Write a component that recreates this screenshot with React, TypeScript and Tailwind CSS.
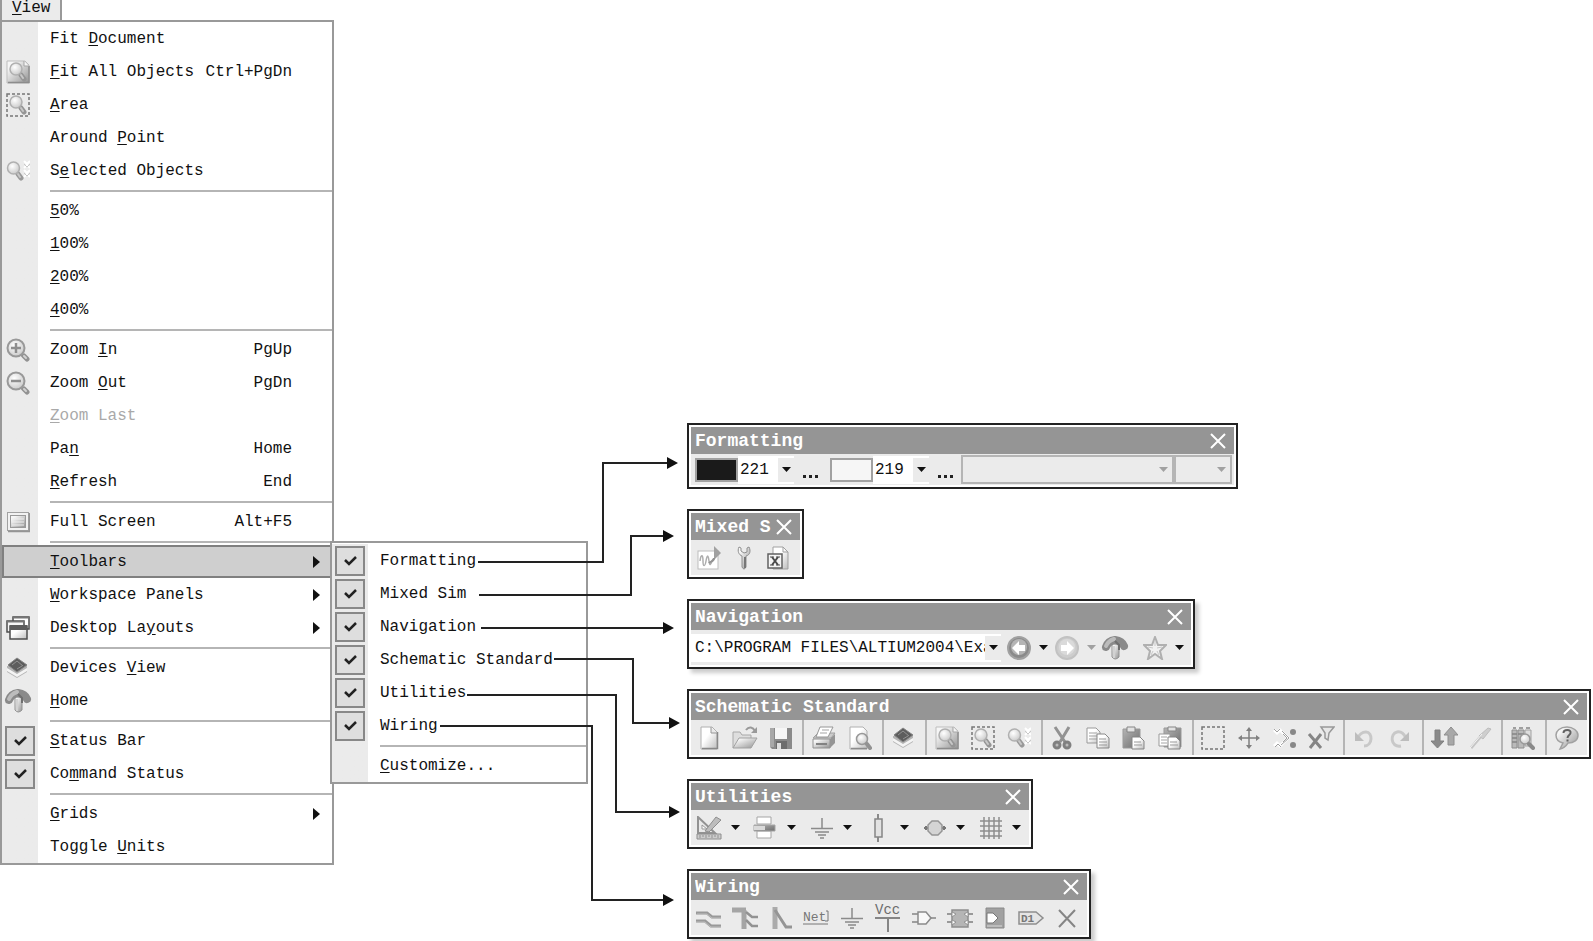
import type { ReactNode } from "react";

type IconProps = { width?: number; height?: number; children: ReactNode };

const Icon = ({ width = 24, height = 24, children }: IconProps) => (
  <svg
    width={width}
    height={height}
    viewBox={`0 0 ${width} ${height}`}
    fill="none"
    aria-hidden="true"
    className="shrink-0"
  >
    {children}
  </svg>
);

const Gradients = () => (
  <svg width="0" height="0" className="absolute" aria-hidden="true">
    <defs>
      <linearGradient id="metal" x1="0" y1="0" x2="1" y2="1">
        <stop offset="0.2" stopColor="#f6f6f6" />
        <stop offset="1" stopColor="#929292" />
      </linearGradient>
      <linearGradient id="paper" x1="0" y1="0" x2="1" y2="1">
        <stop offset="0.4" stopColor="#ffffff" />
        <stop offset="1" stopColor="#bdbdbd" />
      </linearGradient>
      <linearGradient id="dark" x1="0" y1="0" x2="1" y2="1">
        <stop offset="0" stopColor="#b5b5b5" />
        <stop offset="1" stopColor="#6c6c6c" />
      </linearGradient>
      <radialGradient id="lens" cx="0.4" cy="0.35" r="0.7">
        <stop offset="0" stopColor="#ffffff" />
        <stop offset="1" stopColor="#c8c8c8" />
      </radialGradient>
    </defs>
  </svg>
);

const Lens = () => (
  <>
    <path d="M15 15l3 4" stroke="#959595" strokeWidth="5" strokeLinecap="round" />
    <path d="M15 15l2 3" stroke="#c8c8c8" strokeWidth="2" strokeLinecap="round" />
    <circle cx="10" cy="9" r="6" fill="url(#lens)" stroke="#b0b0b0" strokeWidth="1.5" />
  </>
);

const FitAllIcon = () => (
  <Icon>
    <path d="M1 1h18l4 4v18H1z" fill="url(#metal)" stroke="#bdbdbd" />
    <path d="M2 22.5h21V6" stroke="#8c8c8c" strokeWidth="1.5" />
    <path d="M18 1v5h5" stroke="#a5a5a5" fill="#f4f4f4" />
    <Lens />
  </Icon>
);

const AreaIcon = () => (
  <Icon>
    <rect x="1" y="1" width="22" height="22" stroke="#777" strokeWidth="1.5" strokeDasharray="3 2" />
    <Lens />
  </Icon>
);

const SelectedIcon = () => (
  <Icon>
    <path d="M12 15l3 4" stroke="#999" strokeWidth="5" strokeLinecap="round" />
    <path d="M12 15l2 3" stroke="#c8c8c8" strokeWidth="2" strokeLinecap="round" />
    <circle cx="7.5" cy="9" r="6" fill="url(#lens)" stroke="#b0b0b0" strokeWidth="1.5" />
    <path d="M18 2l3 3 3-3M18 9l3-3 3 3M18 11l3 3 3-3M18 18l3-3 3 3" stroke="#fff" strokeWidth="2" />
    <path d="M18 5l3 3 3-3M18 14l3 3 3-3" stroke="#c8c8c8" />
  </Icon>
);

const ZoomIcon = ({ plus }: { plus?: boolean }) => (
  <Icon>
    <path d="M15 16l2 2" stroke="#929292" strokeWidth="3" />
    <path d="M18 18l3 3" stroke="#929292" strokeWidth="5" strokeLinecap="round" />
    <path d="M18 18l2 2" stroke="#d2d2d2" strokeWidth="2" strokeLinecap="round" />
    <circle cx="10" cy="10" r="8.5" fill="url(#lens)" stroke="#999" strokeWidth="2" />
    <path d={plus ? "M5 10h10M10 5v10" : "M5 10h10"} stroke="#8e8e8e" strokeWidth="2.5" />
  </Icon>
);

const FullScreenIcon = () => (
  <Icon>
    <rect x="1.5" y="2.5" width="21" height="18" fill="#f2f2f2" stroke="#a1a1a1" />
    <path d="M2 21.5h21.500V3" stroke="#959595" strokeWidth="1.5" />
    <rect x="4.5" y="5.5" width="15" height="12" fill="url(#metal)" stroke="#999" />
    <path d="M6 9h12M6 12h12M6 15h12" stroke="#eee" />
  </Icon>
);

const WindowsIcon = () => (
  <Icon>
    <g stroke="#4e4e4e" strokeWidth="1.5">
      <path d="M7 1h16v12H7z" fill="#fff" />
      <path d="M1 5h17v11H1z" fill="#f6f6f6" />
      <path d="M4 10h17v13H4z" fill="url(#paper)" />
    </g>
    <path d="M4 9h17v5H4z" fill="#5c5c5c" />
    <path d="M7 1h16v1.500H7zM1 5h17v1.500H1z" fill="#767676" />
  </Icon>
);

const DevicesIcon = () => (
  <Icon>
    <path d="M1 10v6l10 6 10-6v-6z" fill="#b5b5b5" />
    <path d="M1 12l10 6 10-6v3l-10 6-10-6z" fill="#f4f4f4" />
    <path d="M2 9l9-7 10 7-10 7z" fill="#5d5d5d" stroke="#858585" />
    <path d="M6 9l5-4 6 5M11 13l5-3" stroke="#929292" />
  </Icon>
);

const HomeArrowIcon = () => (
  <Icon width={28} height={26}>
    <path d="M11 9h7v13q-4 4-7 0z" fill="url(#metal)" stroke="#929292" />
    <path d="M5 12q2-6 9-7 7 1 9 6" stroke="#8a8a8a" strokeWidth="8" strokeLinecap="round" strokeLinejoin="round" />
    <path d="M5 11q2-5 8-7" stroke="#bcbcbc" strokeWidth="4" strokeLinecap="round" />
    <path d="M14 6l4 4v5" stroke="#6f6f6f" strokeWidth="2" />
    <path d="M13 11v12" stroke="#d2d2d2" strokeWidth="2" />
  </Icon>
);

const WaveIcon = () => (
  <Icon>
    <rect x="1" y="5" width="20" height="18" fill="#fff" stroke="#bdbdbd" />
    <path d="M3 15c1-8 3-6 3 0s2 6 3 0 2-7 3 0 2 2 4-2" stroke="#adadad" strokeWidth="1.5" />
    <path d="M17 0l7 7-7 7z" fill="#a1a1a1" />
    <path d="M17 12c0 4-4 3-5 5" stroke="#929292" strokeWidth="2" />
  </Icon>
);

const WrenchIcon = () => (
  <Icon>
    <path d="M7 1C5 5 7 9 10 10v11q2 4 4 0V10c4-1 5-5 3-9l-2 1v4l-3 1-3-2V2z" fill="url(#metal)" stroke="#8e8e8e" />
    <path d="M13 11v11" stroke="#777" strokeWidth="2" />
  </Icon>
);

const XDocIcon = () => (
  <Icon>
    <path d="M7 1h10l5 5v17H7z" fill="url(#paper)" stroke="#a1a1a1" />
    <path d="M17 1v5h5" stroke="#a1a1a1" />
    <rect x="2" y="8" width="14" height="14" fill="#f5f5f5" stroke="#626262" strokeWidth="1.5" />
    <path d="M6 11l6 8M12 11l-6 8" stroke="#4c4c4c" strokeWidth="2" />
    <path d="M4 11h4M10 11h4M4 19h4M10 19h4" stroke="#4c4c4c" />
  </Icon>
);

const CircleArrowIcon = ({ faded, flip }: { faded?: boolean; flip?: boolean }) => (
  <Icon>
    <circle cx="12" cy="12" r="11" fill={faded ? "#cdcdcd" : "#8a8a8a"} stroke={faded ? "#c2c2c2" : "#a1a1a1"} strokeWidth="2" />
    <circle cx="12" cy="11" r="8" fill={faded ? "#dadada" : "#b5b5b5"} />
    <path d={flip ? "M19 12l-7-7v4H6v6h6v4z" : "M5 12l7-7v4h6v6h-6v4z"} fill="#fff" />
  </Icon>
);

const StarIcon = () => (
  <Icon>
    <path d="M12 1l3 8h8l-6 6 2 8-7-5-7 5 2-8-6-6h8z" fill="#f2f2f2" stroke="#b0b0b0" strokeWidth="2" />
    <path d="M12 5v5M5 11l5 1M8 19l2-4M16 19l-2-4M19 11l-5 1" stroke="#c8c8c8" />
  </Icon>
);

const NewIcon = () => (
  <Icon>
    <path d="M4 1h11l5 5v17H4z" fill="url(#paper)" stroke="#b0b0b0" />
    <path d="M5 22.5h15.500V6" stroke="#888" strokeWidth="1.5" />
    <path d="M14 1v6h6" fill="#e8e8e8" stroke="#969696" />
  </Icon>
);

const OpenIcon = () => (
  <Icon width={28}>
    <path d="M2 22V6h7l2 3h9v5" fill="#dedede" stroke="#a8a8a8" />
    <path d="M2 22L8 12h18l-6 10z" fill="url(#metal)" stroke="#a1a1a1" />
    <path d="M15 4c3-4 7-3 9 1" stroke="#999" strokeWidth="2" />
    <path d="M26 1v6h-6z" fill="#999" />
  </Icon>
);

const SaveIcon = () => (
  <Icon>
    <path d="M1 2h22v21H3l-2-2z" fill="#8a8a8a" />
    <path d="M1 2h4v19H1z" fill="#a8a8a8" />
    <path d="M6 2h12v11H6z" fill="#f6f6f6" />
    <path d="M7 15h11v8H7z" fill="#6d6d6d" />
    <path d="M8 17h4v6H8z" fill="#e0e0e0" />
  </Icon>
);

const PrintIcon = () => (
  <Icon>
    <path d="M1 12l5-5h17l-4 5z" fill="#cbcbcb" stroke="#a1a1a1" />
    <path d="M8 1h13l-5 10H4z" fill="#fff" stroke="#969696" />
    <path d="M10 4h7M8 7h7" stroke="#a5a5a5" />
    <path d="M1 13h17v9H1z" fill="url(#metal)" stroke="#929292" />
    <path d="M18 13l5-5v9l-5 5z" fill="#959595" />
    <path d="M4 18h11" stroke="#828282" strokeWidth="2" />
  </Icon>
);

const PreviewIcon = () => (
  <Icon>
    <path d="M2 1h13l4 4v18H2z" fill="url(#paper)" stroke="#b0b0b0" />
    <path d="M3 22.5h16" stroke="#8c8c8c" strokeWidth="1.5" />
    <circle cx="14" cy="13" r="5.5" fill="url(#lens)" stroke="#999" strokeWidth="1.5" />
    <path d="M19 18l3 4" stroke="#929292" strokeWidth="4" strokeLinecap="round" />
  </Icon>
);

const CutIcon = () => (
  <Icon>
    <path d="M5 1l10 15M19 1l-9 15" stroke="#929292" strokeWidth="3" />
    <circle cx="7" cy="19" r="3" fill="#bbb" stroke="#808080" strokeWidth="3" />
    <circle cx="17" cy="19" r="3" fill="#bbb" stroke="#808080" strokeWidth="3" />
  </Icon>
);

const CopyIcon = () => (
  <Icon>
    <path d="M1 2h9l4 4v11H1z" fill="url(#paper)" stroke="#999" />
    <path d="M3 7h8M3 10h8M3 13h8" stroke="#a1a1a1" />
    <path d="M11 8h8l4 4v10H11z" fill="url(#paper)" stroke="#888" />
    <path d="M13 13h7M13 16h8M13 19h8" stroke="#999" />
  </Icon>
);

const PasteIcon = ({ stack }: { stack?: boolean }) => (
  <Icon>
    <path d={stack ? "M6 2h17v19H6z" : "M1 3h17v19H1z"} fill="url(#dark)" stroke="#999" />
    <path d={stack ? "M10 1h8v4h-8z" : "M5 1h8v5H5z"} fill="#e2e2e2" stroke="#858585" />
    {stack && <path d="M1 8h11v12H1z" fill="#fff" stroke="#999" />}
    {stack && <path d="M3 11h6M3 14h6M3 17h6" stroke="#a5a5a5" />}
    <path d="M10 11h8l4 4v8H10z" fill="url(#paper)" stroke="#858585" />
    <path d="M12 16h7M12 19h8" stroke="#999" />
  </Icon>
);

const MarqueeIcon = () => (
  <Icon>
    <rect x="1" y="1" width="22" height="22" stroke="#777" strokeWidth="1.5" strokeDasharray="3 2" />
  </Icon>
);

const MoveIcon = () => (
  <Icon>
    <path d="M12 4v16M4 12h16" stroke="#808080" strokeWidth="1.5" />
    <path d="M12 1l3 4H9zM12 23l3-4H9zM1 12l4-3v6zM23 12l-4-3v6z" fill="#808080" />
  </Icon>
);

const DeselectIcon = () => (
  <Icon>
    <path d="M1 4l3 3 3-3 8 8-8 8-3-3-3 3" stroke="#fff" strokeWidth="3" />
    <path d="M1 3l3 3 3-3M2 21l3-3 3 3M9 5l7 7-8 7M10 8l4 4-4 4" stroke="#a1a1a1" />
    <circle cx="20" cy="6" r="3" fill="#888" />
    <circle cx="20" cy="19" r="3" fill="#888" />
  </Icon>
);

const ClearFilterIcon = () => (
  <Icon width={28}>
    <path d="M2 8l12 14M14 8L3 22" stroke="#858585" strokeWidth="3" />
    <path d="M14 1h13l-5 6-1 7-3-2V7z" fill="#e7e7e7" stroke="#999" strokeWidth="1.5" />
  </Icon>
);

const UndoIcon = ({ flip }: { flip?: boolean }) => (
  <Icon>
    {flip ? (
      <>
        <path d="M13 20C2 22 2 7 9 6c4-1 7 2 9 6" stroke="#c8c8c8" strokeWidth="3" />
        <path d="M21 6v9h-9z" fill="#bdbdbd" />
      </>
    ) : (
      <>
        <path d="M12 20c9 0 9-14 2-14-4 0-7 3-8 6" stroke="#c8c8c8" strokeWidth="3" />
        <path d="M3 6v9h9z" fill="#bdbdbd" />
      </>
    )}
  </Icon>
);

const UpDownIcon = () => (
  <Icon width={28}>
    <path d="M5 4h5v11h4l-6.500 7L1 15h4z" fill="#8a8a8a" stroke="#808080" />
    <path d="M18 19h6V9h4l-7-8-7 8h4z" fill="#a8a8a8" stroke="#8e8e8e" />
  </Icon>
);

const WandIcon = () => (
  <Icon>
    <path d="M3 22l11-13" stroke="#c5c5c5" strokeWidth="3" />
    <path d="M11 10l9-8 3 1-8 10z" fill="#cecece" stroke="#bdbdbd" />
    <path d="M2 22L14 8" stroke="#f4f4f4" />
  </Icon>
);

const LibraryIcon = () => (
  <Icon>
    <path d="M1 4h5v18H1zM7 4h6v18H7z" fill="#bababa" stroke="#8e8e8e" />
    <path d="M1 8h5M1 12h5M1 16h5M7 8h6M2 2h3M8 2h4M15 2h4" stroke="#858585" strokeWidth="1.5" />
    <path d="M14 4h6v16h-6z" fill="#dedede" stroke="#a1a1a1" />
    <circle cx="14" cy="13" r="5" fill="url(#lens)" stroke="#999" strokeWidth="1.5" />
    <path d="M18 18l4 4" stroke="#8a8a8a" strokeWidth="4" strokeLinecap="round" />
  </Icon>
);

const HelpIcon = () => (
  <Icon>
    <path
      d="M12 1C5 1 1 5 1 9c0 5 3 7 7 8l-3 6c5-1 6-3 8-6 6 0 10-3 10-8 0-4-5-8-11-8z"
      fill="url(#metal)"
      stroke="#a1a1a1"
      strokeWidth="1.5"
    />
    <path d="M8.5 7c0-4 8-4 7 0 0 2-3 2-3 5M12.500 13.500v2" stroke="#636363" strokeWidth="2" />
  </Icon>
);

const DrawIcon = () => (
  <Icon width={26}>
    <path d="M2 1v16h17z" fill="#e9e9e9" stroke="#929292" strokeWidth="2" />
    <path d="M6 9v4h5z" fill="#fff" stroke="#999" />
    <path d="M9 15L20 1l5 3-12 12z" fill="#bdbdbd" stroke="#8e8e8e" />
    <path d="M1 18h24v5H1z" fill="#ccc" stroke="#8e8e8e" />
    <path d="M4 19v3M7 19v2M10 19v3M13 19v2M16 19v3M19 19v2M22 19v3" stroke="#929292" />
  </Icon>
);

const AlignIcon = () => (
  <Icon>
    <path d="M4 1h14v7H4zM4 15h14v7H4z" fill="#fff" stroke="#a5a5a5" />
    <path d="M1 9h21v6H1z" fill="url(#dark)" stroke="#a5a5a5" />
    <path d="M1 10h11v4H1z" fill="#dadada" />
  </Icon>
);

const GroundIcon = () => (
  <Icon>
    <path d="M12 2v10M1 12.500h22M5 16h14M8 19h8M10 22h4" stroke="#8b8b8b" strokeWidth="1.5" />
  </Icon>
);

const ResistorIcon = () => (
  <Icon height={28}>
    <path d="M12 0v28" stroke="#8a8a8a" strokeWidth="2" />
    <rect x="9" y="5" width="7" height="18" fill="#e2e2e2" stroke="#858585" strokeWidth="1.5" />
  </Icon>
);

const SourceIcon = () => (
  <Icon>
    <path d="M1 12h22M3 10v4M21 10v4" stroke="#777" strokeWidth="2" />
    <path d="M9 5h6l4 4v6l-4 4H9l-4-4V9z" fill="#d4d4d4" stroke="#959595" strokeWidth="1.5" />
  </Icon>
);

const GridIcon = () => (
  <Icon>
    <path d="M5 1v22M10 1v22M15 1v22M20 1v22M1 5h22M1 10h22M1 15h22M1 20h22" stroke="#8e8e8e" strokeWidth="1.5" />
  </Icon>
);

const WireIcon = () => (
  <Icon width={26}>
    <path d="M0 7h11l5 4h9M0 15h9l6 5h10" stroke="#999" strokeWidth="3" />
    <path d="M1 8h10l5 4h9M0 16h9l6 5h10" stroke="#bdbdbd" />
  </Icon>
);

const BusIcon = () => (
  <Icon width={26}>
    <path d="M0 4h14M12 4v19" stroke="#a5a5a5" strokeWidth="5" />
    <path d="M14 6l6 5h6M14 14l6 6h6" stroke="#929292" strokeWidth="2.5" />
  </Icon>
);

const BusEntryIcon = () => (
  <Icon>
    <path d="M6 1v22" stroke="#ababab" strokeWidth="5" />
    <path d="M6 4l11 17h6" stroke="#959595" strokeWidth="3" />
  </Icon>
);

const NetIcon = () => (
  <Icon width={28}>
    <text x="1" y="15" fontSize="13" fill="#777" fontFamily="Liberation Mono, monospace">
      Net
    </text>
    <path d="M24 5h2v10h-3M1 18h25" stroke="#777" />
  </Icon>
);

const VccIcon = () => (
  <Icon width={28} height={30}>
    <text x="1" y="11" fontSize="14" fill="#6d6d6d" fontFamily="Liberation Mono, monospace">
      Vcc
    </text>
    <path d="M1 15h25M14 15v14" stroke="#858585" strokeWidth="2" />
  </Icon>
);

const GateIcon = () => (
  <Icon>
    <path d="M0 8h7M0 16h7M18 12h6" stroke="#858585" strokeWidth="1.5" />
    <path d="M6 6h8l5 6-5 6H6z" fill="#f8f8f8" stroke="#8a8a8a" strokeWidth="1.5" />
  </Icon>
);

const SheetIcon = () => (
  <Icon width={26}>
    <path d="M0 8h26M0 16h26" stroke="#999" strokeWidth="2" />
    <path d="M5 4h16v17H5z" fill="#b5b5b5" stroke="#8e8e8e" strokeWidth="1.5" />
    <path d="M5 6l4 2-4 3zM21 6l-4 2 4 3zM5 14l4 2-4 3zM21 14l-4 2 4 3z" fill="#fff" stroke="#929292" />
  </Icon>
);

const SheetEntryIcon = () => (
  <Icon>
    <path d="M3 2h18v20H3z" fill="#a1a1a1" stroke="#8a8a8a" />
    <path d="M4 7h6l5 5-5 5H4z" fill="#fff" stroke="#777" />
    <path d="M4 20h15" stroke="#bdbdbd" strokeWidth="2" />
  </Icon>
);

const PortIcon = () => (
  <Icon width={28}>
    <path d="M2 6h17l7 6-7 6H2z" fill="#e5e5e5" stroke="#8e8e8e" strokeWidth="1.5" />
    <text x="4" y="16" fontSize="11" fontWeight="700" fill="#777" fontFamily="Liberation Mono, monospace">
      D1
    </text>
  </Icon>
);

const CrossIcon = () => (
  <Icon>
    <path d="M4 4l16 17M20 4L4 21" stroke="#858585" strokeWidth="2" />
  </Icon>
);

const CheckMark = () => (
  <svg width="13" height="12" viewBox="0 0 13 12" fill="none" aria-hidden="true" className="pointer-events-none">
    <path d="M1 5l4 4 7-7" stroke="#222" strokeWidth="2.5" />
  </svg>
);

const DownArrow = ({ faded }: { faded?: boolean }) => (
  <svg width="9" height="5" viewBox="0 0 9 5" aria-hidden="true" className="pointer-events-none shrink-0">
    <path d="M0 0h9L4.500 5z" fill={faded ? "#a1a1a1" : "#111"} />
  </svg>
);

// "&" marks the access key, the same way the resource strings do
const Label = ({ text }: { text: string }) => {
  const at = text.indexOf("&");
  if (at < 0) return <>{text}</>;
  return (
    <>
      {text.slice(0, at)}
      <u className="underline underline-offset-2">{text[at + 1]}</u>
      {text.slice(at + 2)}
    </>
  );
};

type Item = {
  label: string;
  keys?: string;
  icon?: ReactNode;
  disabled?: boolean;
  checked?: boolean;
  arrow?: boolean;
  submenu?: boolean;
};

const viewMenu: Item[][] = [
  [
    { label: "Fit &Document" },
    { label: "&Fit All Objects", keys: "Ctrl+PgDn", icon: <FitAllIcon /> },
    { label: "&Area", icon: <AreaIcon /> },
    { label: "Around &Point" },
    { label: "S&elected Objects", icon: <SelectedIcon /> },
  ],
  [{ label: "&50%" }, { label: "&100%" }, { label: "&200%" }, { label: "&400%" }],
  [
    { label: "Zoom &In", keys: "PgUp", icon: <ZoomIcon plus /> },
    { label: "Zoom &Out", keys: "PgDn", icon: <ZoomIcon /> },
    { label: "&Zoom Last", disabled: true },
    { label: "Pa&n", keys: "Home" },
    { label: "&Refresh", keys: "End" },
  ],
  [{ label: "Full Screen", keys: "Alt+F5", icon: <FullScreenIcon /> }],
  [
    { label: "&Toolbars", arrow: true, submenu: true },
    { label: "&Workspace Panels", arrow: true },
    { label: "Desktop La&youts", arrow: true, icon: <WindowsIcon /> },
  ],
  [
    { label: "Devices &View", icon: <DevicesIcon /> },
    { label: "&Home", icon: <HomeArrowIcon /> },
  ],
  [
    { label: "&Status Bar", checked: true },
    { label: "Co&mmand Status", checked: true },
  ],
  [{ label: "&Grids", arrow: true }, { label: "Toggle &Units" }],
];

const toolbarsMenu: Item[][] = [
  ["Formatting", "Mixed Sim", "Navigation", "Schematic Standard", "Utilities", "Wiring"].map((label) => ({
    label,
    checked: true,
  })),
  [{ label: "&Customize..." }],
];

const MenuRow = ({ item }: { item: Item }) => {
  if (item.checked) {
    return (
      <label className="flex h-[33px] items-center">
        <span className="grid w-9 shrink-0 place-items-center">
          <input
            type="checkbox"
            defaultChecked
            className="col-start-1 row-start-1 size-[30px] appearance-none border-2 border-[#888] bg-[#dedede]"
          />
          <span className="pointer-events-none col-start-1 row-start-1">
            <CheckMark />
          </span>
        </span>
        <span className="pl-3">
          <Label text={item.label} />
        </span>
      </label>
    );
  }
  return (
    <button
      type="button"
      disabled={item.disabled}
      className={`flex h-[33px] w-full items-center text-left ${item.disabled ? "text-[#a9a9a9]" : ""} ${
        item.submenu ? "bg-[#cfcfcf] outline-2 -outline-offset-2 outline-[#808080]" : ""
      }`}
    >
      <span className="flex w-9 shrink-0 justify-center pr-1">{item.icon}</span>
      <span className="grow pl-3">
        <Label text={item.label} />
      </span>
      {item.keys && <span className="pr-10">{item.keys}</span>}
      {item.arrow && (
        <svg width="7" height="12" viewBox="0 0 7 12" aria-hidden="true" className="mr-3">
          <path d="M0 0l7 6-7 6z" fill="#111" />
        </svg>
      )}
    </button>
  );
};

const Menu = ({ groups }: { groups: Item[][] }) => (
  <ul className="bg-linear-to-r from-[#ebebeb] from-[36px] to-white to-[36px]">
    {groups.map((group, i) => (
      <li key={i}>
        {i > 0 && (
          <div className="flex h-[7px] items-center pl-12">
            <hr className="w-full border-t-2 border-[#b5b5b5]" />
          </div>
        )}
        <ul>
          {group.map((item) => (
            <li key={item.label} className="relative">
              <MenuRow item={item} />
              {item.submenu && (
                <div className="absolute -top-1 left-full z-10 -ml-0.5 w-[258px] border-2 border-[#999] bg-white pt-px">
                  <Menu groups={toolbarsMenu} />
                </div>
              )}
            </li>
          ))}
        </ul>
      </li>
    ))}
  </ul>
);

type ToolbarProps = { title: string; className: string; children: ReactNode };

const Toolbar = ({ title, className, children }: ToolbarProps) => (
  <section
    className={`flex flex-col border-2 border-[#222] bg-[#ebebeb] p-0.5 ring-2 ring-white ring-inset ${className}`}
  >
    <header className="flex h-[27px] items-center justify-between bg-[#959595] pr-2 pl-1 text-white">
      <h2 className="overflow-hidden text-lg leading-6 font-bold whitespace-nowrap">{title}</h2>
      <button type="button" aria-label={`Close ${title}`} className="shrink-0">
        <svg width="16" height="16" viewBox="0 0 16 16" fill="none">
          <path d="M1 1l14 14M15 1L1 15" stroke="#fff" strokeWidth="2" />
        </svg>
      </button>
    </header>
    {children}
  </section>
);

type Tool = [string, ReactNode];

const ToolButton = ({ tool: [name, icon] }: { tool: Tool }) => (
  <button type="button" aria-label={name} className="flex w-8 shrink-0 justify-center">
    {icon}
  </button>
);

const schematicTools: Tool[][] = [
  [["New", <NewIcon />], ["Open", <OpenIcon />], ["Save", <SaveIcon />]],
  [["Print", <PrintIcon />], ["Preview", <PreviewIcon />]],
  [["Devices", <DevicesIcon />]],
  [["Fit all", <FitAllIcon />], ["Area", <AreaIcon />], ["Selected", <SelectedIcon />]],
  [["Cut", <CutIcon />], ["Copy", <CopyIcon />], ["Paste", <PasteIcon />], ["Paste array", <PasteIcon stack />]],
  [["Select", <MarqueeIcon />], ["Move", <MoveIcon />], ["Deselect", <DeselectIcon />], ["Clear filter", <ClearFilterIcon />]],
  [["Undo", <UndoIcon />], ["Redo", <UndoIcon flip />]],
  [["Hierarchy", <UpDownIcon />], ["Cross probe", <WandIcon />]],
  [["Libraries", <LibraryIcon />]],
  [["Help", <HelpIcon />]],
];

const utilityTools: Tool[] = [
  ["Drawing", <DrawIcon />],
  ["Align", <AlignIcon />],
  ["Power", <GroundIcon />],
  ["Devices", <ResistorIcon />],
  ["Sources", <SourceIcon />],
  ["Grids", <GridIcon />],
];

const wiringTools: Tool[] = [
  ["Wire", <WireIcon />],
  ["Bus", <BusIcon />],
  ["Bus entry", <BusEntryIcon />],
  ["Net label", <NetIcon />],
  ["Ground", <GroundIcon />],
  ["Power port", <VccIcon />],
  ["Part", <GateIcon />],
  ["Sheet symbol", <SheetIcon />],
  ["Sheet entry", <SheetEntryIcon />],
  ["Port", <PortIcon />],
  ["No ERC", <CrossIcon />],
];

const ColorPicker = ({ value, swatch }: { value: string; swatch: string }) => (
  <div className="flex items-center">
    <span className={`h-6 w-[43px] border-2 border-[#a1a1a1] ${swatch}`} />
    <div className="grid h-7 w-14 items-center bg-white">
      <select aria-label="Colour" className="col-start-1 row-start-1 h-7 w-full appearance-none pl-0.5">
        <option>{value}</option>
      </select>
      <span className="pointer-events-none col-start-1 row-start-1 flex h-6 w-4 items-center justify-center justify-self-end bg-[#ebebeb]">
        <DownArrow />
      </span>
    </div>
    <button type="button" aria-label="More colours" className="flex h-6 w-8 items-end justify-center gap-[3px] pb-1">
      <span className="size-[3px] bg-[#222]" />
      <span className="size-[3px] bg-[#222]" />
      <span className="size-[3px] bg-[#222]" />
    </button>
  </div>
);

const EmptySelect = ({ label, className }: { label: string; className: string }) => (
  <div className={`grid items-center ${className}`}>
    <select
      aria-label={label}
      disabled
      className="col-start-1 row-start-1 h-[29px] w-full appearance-none border-2 border-[#b5b5b5]"
    />
    <span className="pointer-events-none col-start-1 row-start-1 mr-1.5 justify-self-end">
      <DownArrow faded />
    </span>
  </div>
);

const MoreButton = ({ label, faded }: { label: string; faded?: boolean }) => (
  <button type="button" aria-label={label} className="flex w-4 shrink-0 justify-center">
    <DownArrow faded={faded} />
  </button>
);

const Connectors = () => (
  <svg
    width="700"
    height="941"
    viewBox="0 0 700 941"
    fill="none"
    aria-hidden="true"
    className="pointer-events-none absolute top-0 left-0 z-20"
  >
    <g stroke="#222" strokeWidth="2">
      <path d="M478 562H603V463H668" />
      <path d="M479 595H631V536H664" />
      <path d="M481 628H664" />
      <path d="M554 659H633V723H670" />
      <path d="M467 695H616V812H670" />
      <path d="M440 726H592V900H664" />
    </g>
    <path
      d="M667 457l11 6-11 6zM663 530l11 6-11 6zM663 622l11 6-11 6zM669 717l11 6-11 6zM669 806l11 6-11 6zM663 894l11 6-11 6z"
      fill="#111"
    />
  </svg>
);

const App = () => {
  return (
    <main className="relative flex min-h-screen items-start overflow-hidden bg-white font-['Liberation_Mono',monospace] text-base leading-5 text-[#111]">
      <Gradients />
      <nav className="w-[334px] shrink-0">
        <button
          type="button"
          className="flex h-5 w-[62px] items-start border-r-2 border-l-2 border-[#999] bg-[#ebebeb] pl-2.5 leading-4"
        >
          <span>
            <Label text="&View" />
          </span>
        </button>
        <div className="border-2 border-[#999]">
          <Menu groups={viewMenu} />
        </div>
      </nav>
      <div className="flex grow flex-col items-start gap-5 pt-[423px] pr-0.5 pl-[353px]">
        <Toolbar title="Formatting" className="w-[551px]">
          <div className="flex h-[31px] items-center pr-0.5 pl-1">
            <div className="flex gap-1">
              <ColorPicker value="221" swatch="bg-[#1a1a1a]" />
              <ColorPicker value="219" swatch="bg-[#f6f6f6]" />
            </div>
            <EmptySelect label="Font" className="grow" />
            <EmptySelect label="Size" className="w-[58px]" />
          </div>
        </Toolbar>
        <Toolbar title="Mixed S" className="w-[117px]">
          <div className="flex h-[35px] items-center justify-between pr-1.5 pl-0.5">
            <ToolButton tool={["Run", <WaveIcon />]} />
            <ToolButton tool={["Setup", <WrenchIcon />]} />
            <ToolButton tool={["Netlist", <XDocIcon />]} />
          </div>
        </Toolbar>
        <Toolbar title="Navigation" className="w-[508px] shadow-[4px_4px_4px_#ccc]">
          <div className="flex h-[35px] items-center pr-1">
            <div className="flex h-7 grow items-center bg-white">
              <input
                aria-label="Address"
                defaultValue="C:\PROGRAM FILES\ALTIUM2004\Exa"
                className="w-0 grow pl-1 outline-none"
              />
              <span className="flex h-6 items-center bg-[#ebebeb]">
                <MoreButton label="Recent addresses" />
              </span>
            </div>
            <div className="flex items-center pl-0.5">
              <ToolButton tool={["Back", <CircleArrowIcon />]} />
              <MoreButton label="Back history" />
              <ToolButton tool={["Forward", <CircleArrowIcon faded flip />]} />
              <MoreButton label="Forward history" faded />
            </div>
            <div className="flex items-center gap-2">
              <ToolButton tool={["Home", <HomeArrowIcon />]} />
              <span className="flex items-center">
                <ToolButton tool={["Favourites", <StarIcon />]} />
                <MoreButton label="Favourites list" />
              </span>
            </div>
          </div>
        </Toolbar>
        <Toolbar title="Schematic Standard" className="w-full">
          <div className="flex h-[35px] items-center justify-between pr-1 pl-0.5">
            {schematicTools.flatMap((group, i) => [
              i > 0 && <span key={`sep${i}`} className="h-[35px] w-1 border-r-2 border-[#b5b5b5]" />,
              ...group.map((tool) => <ToolButton key={tool[0]} tool={tool} />),
            ])}
          </div>
        </Toolbar>
        <Toolbar title="Utilities" className="w-[346px]">
          <div className="flex h-[35px] items-center justify-between pr-1 pl-0.5">
            {utilityTools.map((tool) => (
              <span key={tool[0]} className="flex items-center gap-0.5">
                <ToolButton tool={tool} />
                <MoreButton label={`${tool[0]} list`} />
              </span>
            ))}
          </div>
        </Toolbar>
        <Toolbar title="Wiring" className="w-[404px] shadow-[4px_4px_4px_#ccc]">
          <div className="flex h-[35px] items-center justify-between pr-1 pl-0.5">
            {wiringTools.map((tool) => (
              <ToolButton key={tool[0]} tool={tool} />
            ))}
          </div>
        </Toolbar>
      </div>
      <Connectors />
    </main>
  );
};

export default App;
